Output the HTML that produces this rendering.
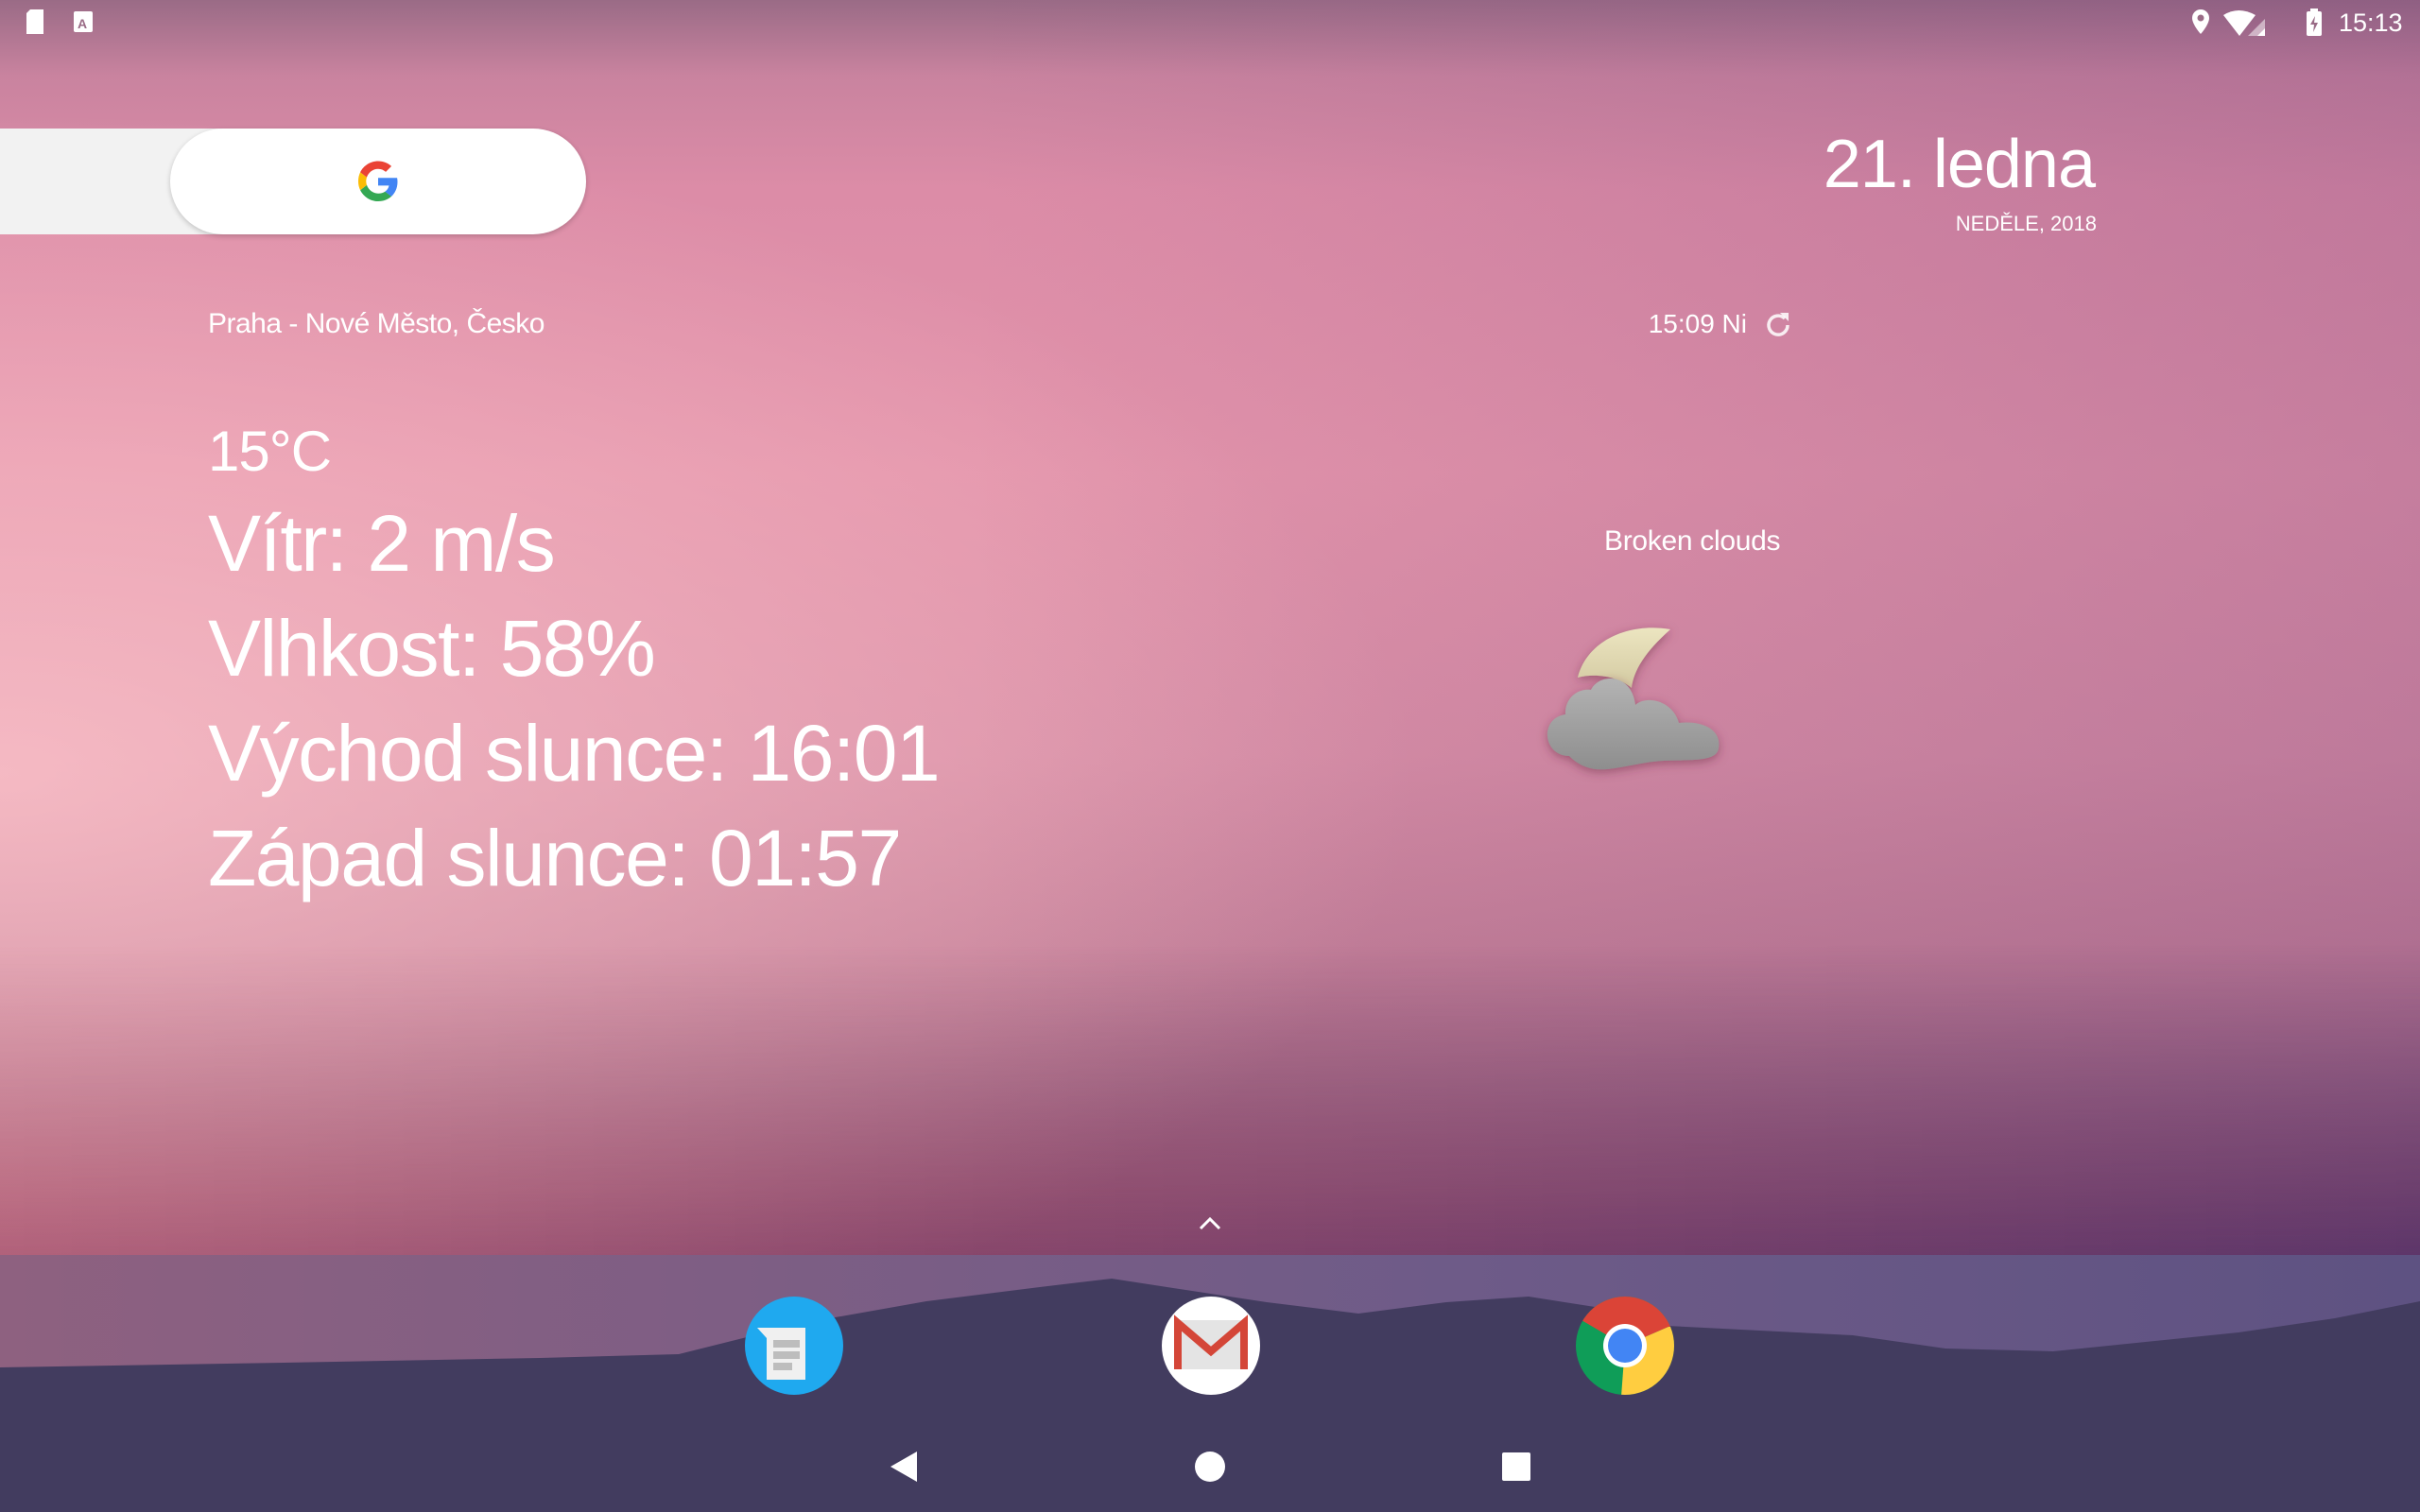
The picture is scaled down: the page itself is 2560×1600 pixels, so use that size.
<!DOCTYPE html>
<html><head><meta charset="utf-8"><style>
html,body{margin:0;padding:0}
body{width:2560px;height:1600px;position:relative;overflow:hidden;font-family:"Liberation Sans",sans-serif;color:#fff;
background:
radial-gradient(ellipse 1500px 700px at 0px 820px, rgba(255,200,205,0.75), rgba(255,190,200,0) 100%),
linear-gradient(180deg,#9a6b86 0px,#c9839f 80px,#dc8ca7 200px,#e394ab 500px,#d88ea6 800px,#c58099 1000px,#aa6c86 1150px,#9e5a76 1260px,#8e4c6e 1328px);
}
.abs{position:absolute}
.rt{position:absolute;right:0;top:0;width:2560px;height:1328px;background:linear-gradient(90deg,rgba(0,0,0,0) 40%,rgba(110,60,120,0.25) 100%)}
.low{position:absolute;left:0;top:1000px;width:2560px;height:328px;background:linear-gradient(90deg,rgba(200,90,110,0.35),rgba(60,40,100,0.55));-webkit-mask-image:linear-gradient(180deg,transparent,#000);mask-image:linear-gradient(180deg,transparent,#000)}
.water{position:absolute;left:0;top:1328px;width:2560px;height:272px;background:linear-gradient(90deg,#8e6180,#6e5b88 60%,#5e5282)}
.t{position:absolute;white-space:nowrap;line-height:1}
.big{font-size:84px;letter-spacing:-1.5px}
</style></head><body>
<div class="rt"></div>
<div class="low"></div>
<div class="water"></div>
<svg class="abs" style="left:0;top:0" width="2560" height="1600">
<path d="M0 1447 L300 1442 L571 1437 L718 1433 L850 1400 L980 1377 L1100 1362 L1176 1353 L1241 1363 L1340 1378 L1437 1390 L1530 1378 L1617 1372 L1700 1385 L1764 1403 L1960 1413 L2058 1427 L2172 1430 L2368 1410 L2470 1395 L2560 1377 L2560 1600 L0 1600Z" fill="#423c5f"/>
</svg>
<!-- status bar -->
<svg class="abs" style="left:26px;top:10px" width="80" height="28"><path d="M2 4 L6 0 L20 0 L20 26 L2 26Z" fill="#fff"/><rect x="52" y="2" width="20" height="22" rx="2" fill="#fff"/><text x="56" y="20" font-size="14" fill="#9a6b86" font-family="Liberation Sans" font-weight="bold">A</text></svg>
<svg class="abs" style="left:2310px;top:8px" width="150" height="32">
<path d="M18 2a9 9 0 0 1 9 9c0 7-9 17-9 17s-9-10-9-17a9 9 0 0 1 9-9z" fill="#fff"/><circle cx="18" cy="11" r="3.5" fill="#9a6b86"/>
<path d="M42 8 Q58 -2 76 8 L59 30Z" fill="#fff"/><path d="M86 30 L86 12 L68 30Z" fill="rgba(255,255,255,0.5)"/><path d="M86 30 L86 22 L78 30Z" fill="#fff"/>
<rect x="130" y="4" width="16" height="26" rx="2" fill="#fff"/><rect x="134" y="1" width="8" height="4" fill="#fff"/><path d="M139 9 L134 18 L138 18 L137 26 L142 16 L138 16Z" fill="#9a6b86"/>
</svg>
<div class="t" style="left:2474px;top:11px;font-size:27px">15:13</div>
<!-- search -->
<div class="abs" style="left:0;top:136px;width:240px;height:112px;background:#f2f2f2"></div>
<div class="abs" style="left:180px;top:136px;width:440px;height:112px;border-radius:56px;background:#fff;box-shadow:0 2px 6px rgba(0,0,0,0.2)"></div>
<svg class="abs" style="left:376px;top:168px" width="48" height="48" viewBox="0 0 48 48">
<path d="M44.5 24.5c0-1.5-.1-2.9-.4-4.3H24v8.2h11.5c-.5 2.7-2 4.9-4.3 6.4l6.7 5.2c3.9-3.6 6.6-8.9 6.6-15.5z" fill="#4285F4"/>
<path d="M24 45c5.7 0 10.5-1.9 14-5.1l-6.7-5.2c-1.9 1.3-4.3 2-7.3 2-5.600 0-10.3-3.8-12-8.9l-6.9 5.4C8.6 40.1 15.7 45 24 45z" fill="#34A853"/>
<path d="M12 27.8c-.4-1.3-.7-2.7-.7-4.1s.3-2.8.7-4.1l-6.9-5.4C3.7 17 3 20.3 3 23.7s.7 6.7 2.1 9.5z" fill="#FBBC05"/>
<path d="M24 10.7c3.1 0 5.9 1.1 8.1 3.2l6-6C34.5 4.6 29.7 2.5 24 2.5 15.7 2.5 8.6 7.3 5.1 14.2l6.9 5.4c1.7-5.1 6.4-8.9 12-8.9z" fill="#EA4335"/>
</svg>
<!-- date -->
<div class="t" style="right:344px;top:138px;font-size:72px;letter-spacing:-1px">21. ledna</div>
<div class="t" style="right:342px;top:226px;font-size:22px">NEDĚLE, 2018</div>
<!-- weather -->
<div class="t" style="left:220px;top:328px;font-size:30px;letter-spacing:-0.5px">Praha - Nové Město, Česko</div>
<div class="t" style="right:712px;top:329px;font-size:28px">15:09 Ni</div>
<svg class="abs" style="left:1866px;top:328px" width="30" height="30" viewBox="0 0 30 30"><path d="M22 9 A10 10 0 1 0 25 16" fill="none" stroke="rgba(255,255,255,0.85)" stroke-width="3.5"/><path d="M17 3 L26 3 L26 12Z" fill="rgba(255,255,255,0.85)"/></svg>
<div class="t" style="left:220px;top:448px;font-size:60px;letter-spacing:-1px">15°C</div>
<div class="t big" style="left:220px;top:533px">Vítr: 2 m/s</div>
<div class="t big" style="left:220px;top:644px">Vlhkost: 58%</div>
<div class="t big" style="left:220px;top:755px">Východ slunce: 16:01</div>
<div class="t big" style="left:220px;top:866px">Západ slunce: 01:57</div>
<div class="t" style="left:1697px;top:558px;font-size:30px;letter-spacing:-0.3px">Broken clouds</div>
<svg class="abs" style="left:1580px;top:600px" width="300" height="260" viewBox="1580 600 300 260">
<defs><linearGradient id="mg" x1="0" y1="0" x2="0" y2="1"><stop offset="0" stop-color="#ece5c0"/><stop offset="1" stop-color="#d3caa2"/></linearGradient>
<linearGradient id="cg" x1="0" y1="0" x2="0" y2="1"><stop offset="0" stop-color="#b3b3b3"/><stop offset="1" stop-color="#8e8e8e"/></linearGradient>
<filter id="sh" x="-30%" y="-30%" width="160%" height="160%"><feDropShadow dx="0" dy="3" stdDeviation="5" flood-color="#6a2a40" flood-opacity="0.5"/></filter></defs>
<path d="M1669 717 C1678 680 1720 658 1767 666 C1740 690 1728 710 1726 728 C1712 716 1688 712 1669 717Z" fill="url(#mg)" filter="url(#sh)"/>
<path d="M1660 800 C1632 800 1628 760 1656 756 C1655 740 1668 728 1683 730 C1692 712 1726 712 1730 746 C1742 735 1770 742 1776 765 C1800 762 1822 772 1818 792 C1816 806 1790 804 1760 805 C1740 806 1720 812 1700 814 C1680 816 1668 808 1660 800Z" fill="url(#cg)" filter="url(#sh)"/>
</svg>
<!-- chevron -->
<svg class="abs" style="left:1268px;top:1286px" width="24" height="16"><path d="M2 14 L12 4 L22 14" fill="none" stroke="#fff" stroke-width="3"/></svg>
<!-- dock -->
<svg class="abs" style="left:786px;top:1370px" width="108" height="108" viewBox="0 0 108 108">
<circle cx="54" cy="54" r="52" fill="#1fa9ef"/>
<path d="M15 35 L66 35 L66 90 L25 90 L25 46Z" fill="#f0f0f0"/>
<rect x="32" y="48" width="28" height="8" fill="#bdbdbd"/><rect x="32" y="60" width="28" height="8" fill="#bdbdbd"/><rect x="32" y="72" width="20" height="8" fill="#bdbdbd"/>
</svg>
<svg class="abs" style="left:1227px;top:1370px" width="108" height="108" viewBox="0 0 108 108">
<circle cx="54" cy="54" r="52" fill="#fff"/>
<rect x="17" y="27" width="74" height="52" fill="#e4e4e4"/>
<path d="M19 79 L19 30 L54 60 L89 30 L89 79" fill="none" stroke="#d44638" stroke-width="8"/>
</svg>
<svg class="abs" style="left:1665px;top:1370px" width="108" height="108" viewBox="0 0 108 108">
<defs><clipPath id="cc"><circle cx="54" cy="54" r="52"/></clipPath></defs>
<g clip-path="url(#cc)">
<rect width="108" height="108" fill="#0f9d58"/>
<path d="M54 54 L8 27 L30 0 L108 0 L108 34 L100 34Z" fill="#db4437"/>
<path d="M54 54 L100 34 L108 34 L108 108 L50 108Z" fill="#ffcd40"/>
</g>
<circle cx="54" cy="54" r="23" fill="#fff"/><circle cx="54" cy="54" r="18" fill="#4285f4"/>
</svg>
<!-- nav -->
<svg class="abs" style="left:940px;top:1532px" width="690" height="40">
<path d="M30 4 L30 36 L2 20Z" fill="#fff"/>
<circle cx="340" cy="20" r="16" fill="#fff"/>
<rect x="649" y="5" width="30" height="30" rx="2" fill="#fff"/>
</svg>
</body></html>
